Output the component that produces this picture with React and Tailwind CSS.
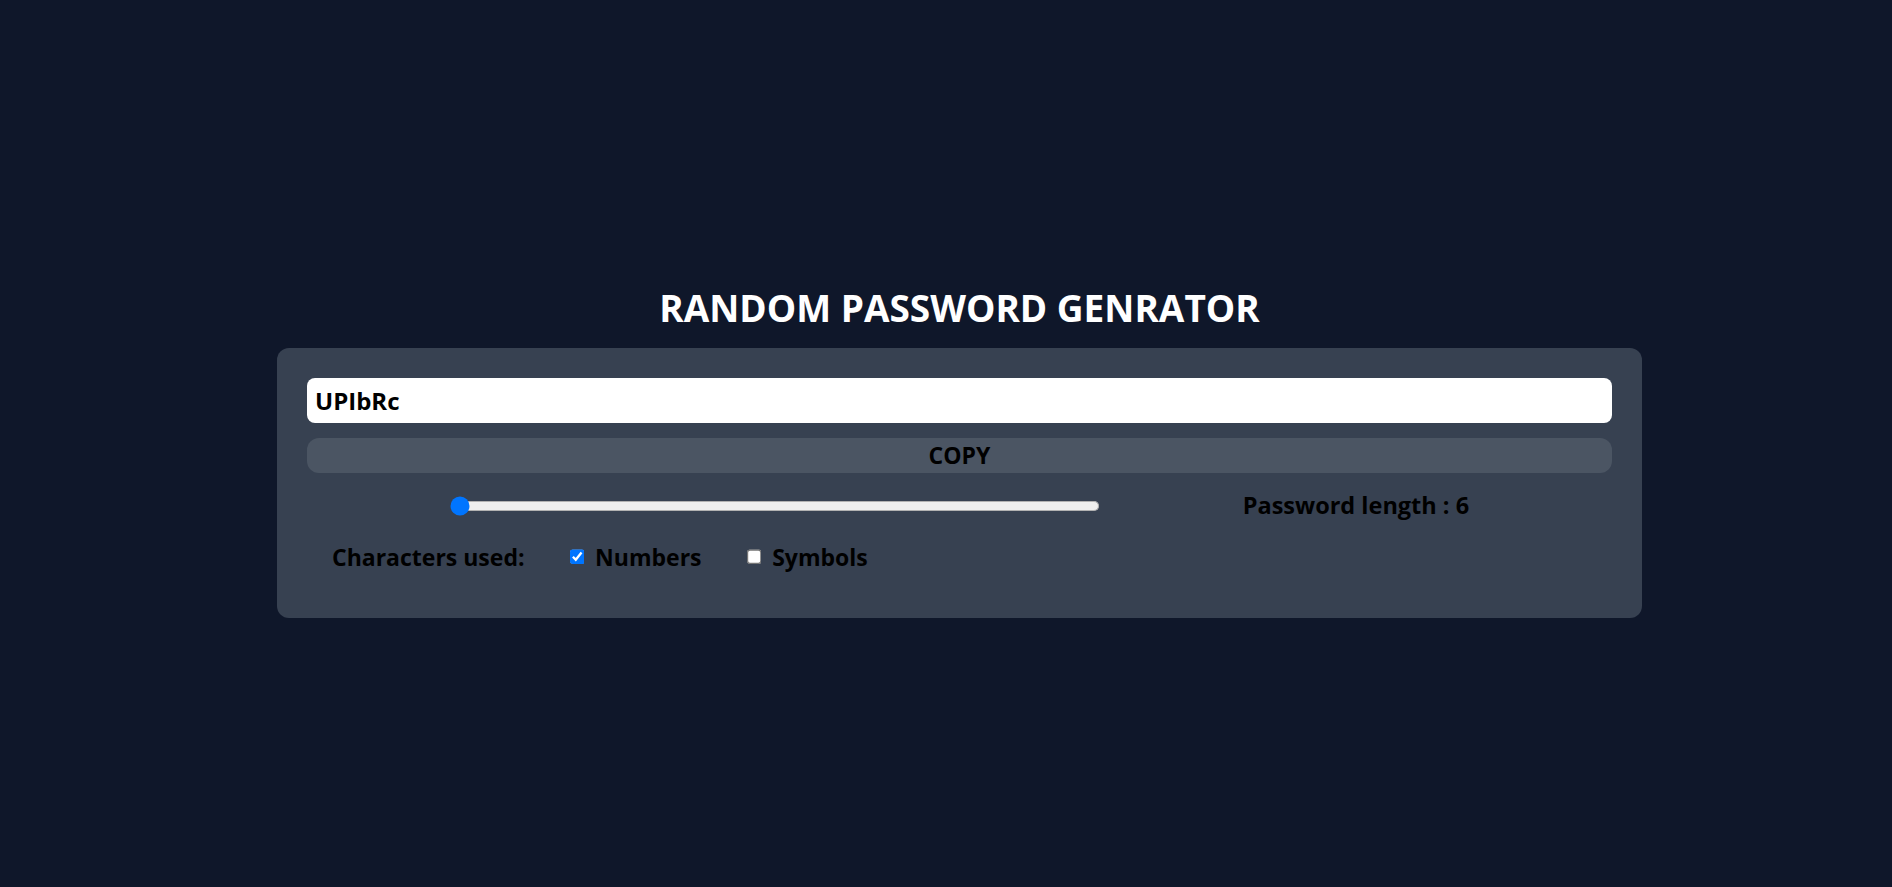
import React, { useState, useCallback } from 'react';

const App = () => {
  const [length, setLength] = useState(6);
  const [numberAllowed, setNumberAllowed] = useState(true);
  const [charAllowed, setCharAllowed] = useState(false);
  const [password, setPassword] = useState('UPIbRc');

  const generatePassword = useCallback((len) => {
    let str = 'ABCDEFGHIJKLMNOPQRSTUVWXYZabcdefghijklmnopqrstuvwxyz';
    if (numberAllowed) str += '0123456789';
    if (charAllowed) str += '!@#$%^&*-_+=[]{}~`';
    let pass = '';
    for (let i = 0; i < len; i++) {
      pass += str.charAt(Math.floor(Math.random() * str.length));
    }
    setPassword(pass);
  }, [numberAllowed, charAllowed]);

  const copyPassword = () => {
    if (navigator.clipboard) navigator.clipboard.writeText(password).catch(() => {});
  };

  return (
    <div
      className="min-h-screen bg-[#0f172a] pt-[284px]"
      style={{ fontFamily: '"Open Sans", "Noto Sans", sans-serif' }}
    >
      <div className="w-[1365px] ml-[277px]">
        <h1 className="text-white text-center font-bold text-[37px] leading-[48px] mb-4">
          RANDOM PASSWORD GENRATOR
        </h1>
        <div className="bg-[#374151] rounded-xl px-[30px] pt-[30px] pb-[45px]">
          <input
            type="text"
            value={password}
            readOnly
            className="w-full h-[45px] bg-white rounded-lg px-2 text-[24px] font-bold text-black outline-none"
          />
          <button
            onClick={copyPassword}
            className="mt-[15px] w-full h-[35px] bg-[#4b5563] rounded-xl text-[23px] font-bold text-black"
          >
            COPY
          </button>
          <div className="mt-4 h-[34px] flex items-center justify-evenly">
            <input
              type="range"
              min={6}
              max={100}
              value={length}
              onChange={(e) => {
                const len = Number(e.target.value);
                setLength(len);
                generatePassword(len);
              }}
              className="w-[520px] [zoom:1.25] cursor-pointer"
            />
            <label className="text-[23.5px] font-bold text-black">Password length : {length}</label>
          </div>
          <div className="mt-[18px] h-[32px] flex items-center gap-[45px] pl-[25px]">
            <span className="text-[23px] font-bold text-black">Characters used:</span>
            <div className="flex items-center gap-[10px]">
              <input
                type="checkbox"
                checked={numberAllowed}
                onChange={() => setNumberAllowed((p) => !p)}
                className="[zoom:1.2]"
              />
              <label className="text-[23px] font-bold text-black">Numbers</label>
            </div>
            <div className="flex items-center gap-[10px]">
              <input
                type="checkbox"
                checked={charAllowed}
                onChange={() => setCharAllowed((p) => !p)}
                className="[zoom:1.2]"
              />
              <label className="text-[23px] font-bold text-black">Symbols</label>
            </div>
          </div>
        </div>
      </div>
    </div>
  );
};

export default App;
